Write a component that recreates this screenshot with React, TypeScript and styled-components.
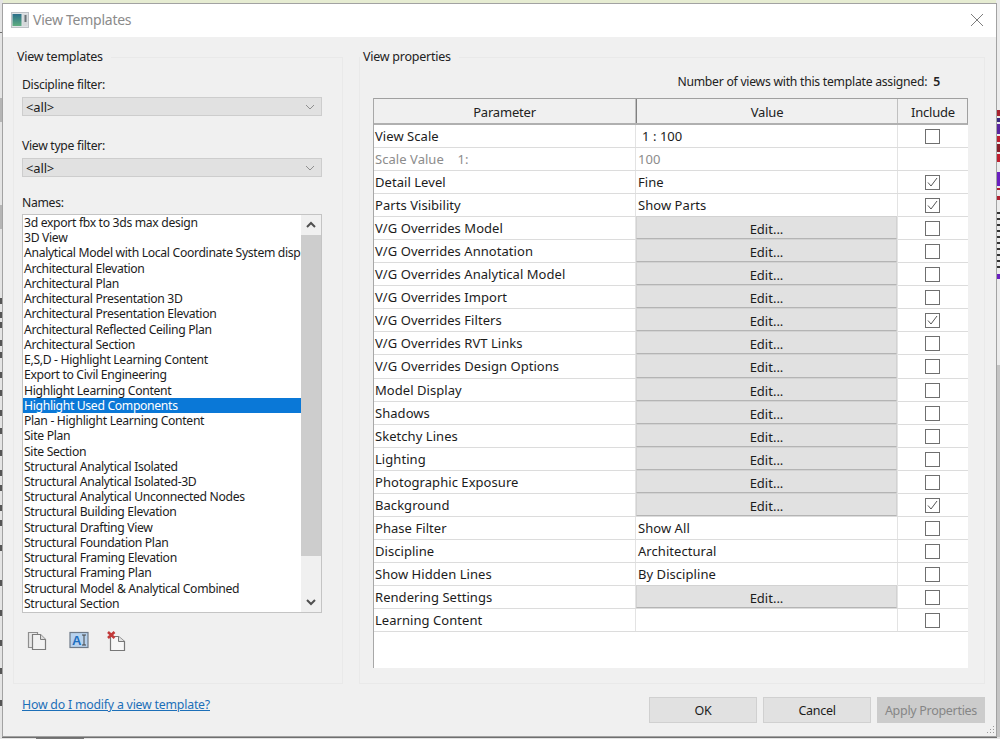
import React from 'react';
import styled, { createGlobalStyle } from 'styled-components';

const Global = createGlobalStyle`
  html, body { margin: 0; padding: 0; }
  body { font-family: "Noto Sans", "Liberation Sans", sans-serif; font-size: 13px; color: #1c1c1c; }
  * { box-sizing: border-box; }
`;

const Screen = styled.div`
  position: relative; width: 1000px; height: 739px; overflow: hidden;
  background: #d6d6d6; padding: 4px 4px 3px 3px; display: flex;
`;
const Backdrop = styled.svg`position: absolute; inset: 0; width: 1000px; height: 739px;`;
const Dialog = styled.div`
  position: relative; flex: 1; display: flex; flex-direction: column; background: #f0f0f0;
  box-shadow: 0 0 0 1px #a2a2a2, 0 1px 0 1px #6f6f6f;
`;
const TitleBar = styled.div`
  height: 33px; background: #fff; display: flex; align-items: center; padding: 0 12px 2px 8px; gap: 4px; flex: none;
`;
const TitleText = styled.span`flex: 1; font-size: 14px; color: #8b8b8b; letter-spacing: -.25px;`;
const Main = styled.div`
  flex: none; height: 655px; padding: 12px 11px 0 10px; display: grid; grid-template-columns: 330px 626px; column-gap: 16px;
`;
const Group = styled.fieldset`
  margin: 0; padding: 0; min-width: 0; border: 1px solid #e9e9e9; position: relative; height: 635px;
`;
const Legend = styled.legend`
  padding: 0 8px 0 3px; margin-left: 0; font-size: 12.5px; line-height: 16px; letter-spacing: -.25px; color: #222;
`;
const LeftInner = styled.div`
  padding: 12px 20px 0 8px; display: flex; flex-direction: column;
`;
const FieldLabel = styled.label`
  display: block; font-size: 12.2px; line-height: 16px; letter-spacing: -.3px; margin-bottom: 4px; color: #222;
`;
const Select = styled.div<{ $gap: number }>`
  height: 19px; width: 300px; background: #e1e1e1; border: 1px solid #cdcdcd; display: flex; align-items: center;
  justify-content: space-between; padding: 0 6px 0 3px; font-size: 13px; letter-spacing: -.15px; margin-bottom: ${p => p.$gap}px;
`;
const ListBox = styled.div`
  width: 300px; height: 399px; margin-top: -1px; background: #fff; border: 1px solid #c4c4c4; display: flex;
`;
const ListItems = styled.ul`
  flex: 1; min-width: 0; margin: 0; padding: 0; list-style: none; overflow: hidden;
`;
const ListItem = styled.li<{ $sel?: boolean }>`
  height: 15.24px; line-height: 15px; padding-left: 1px; font-size: 12.2px; letter-spacing: -.33px; white-space: nowrap; overflow: hidden;
  color: ${p => p.$sel ? '#fff' : '#1c1c1c'}; background: ${p => p.$sel ? '#0a78d7' : 'transparent'};
`;
const ScrollBar = styled.div`
  width: 20px; background: #f0f0f0; display: flex; flex-direction: column; align-items: center;
`;
const ScrollArrow = styled.div<{ $end?: boolean }>`
  height: 20px; display: flex; align-items: center; justify-content: center; margin-top: ${p => p.$end ? 'auto' : '0'};
`;
const ScrollThumb = styled.div`width: 20px; height: 321px; background: #cdcdcd;`;
const IconRow = styled.div`display: flex; align-items: flex-start; padding: 18px 0 0 5px;`;
const ToolIcon = styled.svg<{ $mr: number }>`width: 20px; height: 20px; margin-right: ${p => p.$mr}px;`;

const RightInner = styled.div`padding: 0 17px 0 13px; display: flex; flex-direction: column;`;
const Assigned = styled.div`
  height: 33px; padding: 8px 27px 0 0; text-align: right; font-size: 12.2px; letter-spacing: -.25px; color: #222;
`;
const AssignedNum = styled.b`margin-left: 6px; font-weight: 600;`;
const Table = styled.div`
  width: 595px; height: 570px; background: #fff; border-left: 1px solid #a8a8a8; display: flex; flex-direction: column;
`;
const Row = styled.div`
  display: grid; grid-template-columns: 262px 262px 70px; height: 23.05px; border-bottom: 1px solid #dcdcdc; flex: none;
`;
const HeaderRow = styled.div`
  display: grid; grid-template-columns: 262px 262px 70px; height: 27px; background: #f0f0f0;
  border-top: 1px solid #a0a0a0; border-bottom: 2px solid #b0b0b0; border-right: 1px solid #a0a0a0; flex: none;
`;
const HeadCell = styled.div<{ $strong?: boolean }>`
  display: flex; align-items: center; justify-content: center; padding-top: 1px; font-size: 13px; letter-spacing: -.2px; color: #222;
  border-right: 1px solid #c0c0c0; border-left: ${p => p.$strong ? '1px solid #808080' : 'none'};
  &:last-child { border-right: none; }
`;
const Cell = styled.div<{ $dim?: boolean; $indent?: number }>`
  display: flex; align-items: center; padding-left: ${p => p.$indent ?? 1}px; font-size: 13px; letter-spacing: .05px;
  white-space: pre; border-right: 1px solid #e3e3e3; color: ${p => p.$dim ? '#8c8c8c' : '#1c1c1c'};
`;
const EditBtn = styled.button`
  width: 100%; height: 100%; margin: 0; padding: 3px 0 0; background: #e1e1e1; border: 1px solid #d2d2d2; border-bottom: 1px solid #b4b4b4;
  font: inherit; font-size: 13px; color: #1c1c1c;
`;
const EditCell = styled.div`border-right: 1px solid #e3e3e3; margin-top: -1px;`;
const CheckCell = styled.div`display: flex; align-items: center; justify-content: center; padding: 1px 2px 0 0;`;
const CheckBox = styled.span`
  width: 15px; height: 15px; border: 1px solid #6f6f6f; background: #fff; display: flex; align-items: center; justify-content: center;
`;
const Footer = styled.div`flex: 1; position: relative; display: flex; align-items: flex-start; padding: 5px 11px 0 19px;`;
const HelpLink = styled.a`
  flex: 1; font-size: 12.3px; color: #1c6fb8; text-decoration: underline; line-height: 16px; letter-spacing: -.2px;
`;
const Buttons = styled.div`display: flex; gap: 6px;`;
const DlgBtn = styled.button<{ $off?: boolean }>`
  width: 108px; height: 26px; margin: 0; padding: 0; font: inherit; font-size: 12.5px; letter-spacing: -.3px;
  background: ${p => p.$off ? '#cccccc' : '#e1e1e1'}; border: 1px solid ${p => p.$off ? '#cccccc' : '#d0d0d0'}; color: ${p => p.$off ? '#868686' : '#1c1c1c'};
`;
const Grip = styled.svg`position: absolute; right: 1px; bottom: 1px; width: 10px; height: 10px;`;

const names = ['3d export fbx to 3ds max design','3D View','Analytical Model with Local Coordinate System display','Architectural Elevation','Architectural Plan','Architectural Presentation 3D','Architectural Presentation Elevation','Architectural Reflected Ceiling Plan','Architectural Section','E,S,D - Highlight Learning Content','Export to Civil Engineering','Highlight Learning Content','Highlight Used Components','Plan - Highlight Learning Content','Site Plan','Site Section','Structural Analytical Isolated','Structural Analytical Isolated-3D','Structural Analytical Unconnected Nodes','Structural Building Elevation','Structural Drafting View','Structural Foundation Plan','Structural Framing Elevation','Structural Framing Plan','Structural Model & Analytical Combined','Structural Section'];

type R = { p: string; v?: string; edit?: boolean; c?: boolean; none?: boolean; dim?: boolean; indent?: number };
const E = (p: string, c = false): R => ({ p, edit: true, c });
const rows: R[] = [
  { p: 'View Scale', v: '1 : 100', indent: 6 },
  { p: 'Scale Value    1:', v: '100', dim: true, none: true, indent: 2 },
  { p: 'Detail Level', v: 'Fine', c: true, indent: 2 },
  { p: 'Parts Visibility', v: 'Show Parts', c: true, indent: 2 },
  E('V/G Overrides Model'), E('V/G Overrides Annotation'), E('V/G Overrides Analytical Model'), E('V/G Overrides Import'),
  E('V/G Overrides Filters', true), E('V/G Overrides RVT Links'), E('V/G Overrides Design Options'), E('Model Display'),
  E('Shadows'), E('Sketchy Lines'), E('Lighting'), E('Photographic Exposure'), E('Background', true),
  { p: 'Phase Filter', v: 'Show All', indent: 2 }, { p: 'Discipline', v: 'Architectural', indent: 2 }, { p: 'Show Hidden Lines', v: 'By Discipline', indent: 2 },
  E('Rendering Settings'), { p: 'Learning Content', v: '' },
];

const stripes = [
  [110, 6, '#a8232e'], [118, 4, '#3a2a80'], [124, 10, '#5a25a0'], [136, 6, '#c02030'], [144, 8, '#8a1f2a'], [154, 8, '#c02030'],
  [172, 14, '#6a20c0'], [188, 2, '#b02030'], [196, 4, '#b02030'],
  [274, 5, '#6a20c0'],
];
const dashes = [212, 218, 224, 230, 236, 242, 248, 254, 260, 266];

const Chevron = () => (
  <svg width="10" height="6" viewBox="0 0 10 6"><path d="M1 1l4 4 4-4" fill="none" stroke="#8f8f8f" strokeWidth="1" /></svg>
);
const ArrowGlyph = ({ up }: { up?: boolean }) => (
  <svg width="10" height="8" viewBox="0 0 10 8"><path d={up ? 'M1 6l4-4 4 4' : 'M1 2l4 4 4-4'} fill="none" stroke="#505050" strokeWidth="2" /></svg>
);

export default function App() {
  return (
    <Screen>
      <Global />
      <Backdrop viewBox="0 0 1000 739">
        <rect width="1000" height="4" fill="#e6ecd2" />
        <rect width="3" height="739" fill="#e4e4e4" />
        <rect x="996" width="4" height="739" fill="#ececec" />
        {stripes.map(([y, h, c]) => <rect key={String(y)} x="997" y={y as number} width="3" height={h as number} fill={c as string} />)}
        {dashes.map(y => <rect key={y} x="997" y={y} width="3" height="2" fill="#333" />)}
        <rect x="997" y="365" width="3" height="374" fill="#c4c4c4" />
        <rect y="32" width="3" height="1" fill="#707070" />
        <rect y="98" width="3" height="24" fill="#b5b5b5" />
        <rect y="205" width="3" height="24" fill="#b5b5b5" />
        {[298, 312, 322, 340, 352, 372, 390, 410, 428, 450, 470, 485, 505, 520, 545, 580, 610, 640, 668, 700].map(y => (
          <rect key={y} y={y} width="2" height="6" fill="#555" />
        ))}
        <rect y="737" width="1000" height="2" fill="#e4e4e4" />
        <rect x="36" y="737" width="48" height="2" fill="#777" />
      </Backdrop>
      <Dialog>
        <TitleBar>
          <svg width="18" height="16" viewBox="0 0 18 16">
            <defs>
              <linearGradient id="tpl" x1="0" y1="0" x2="0" y2="1">
                <stop offset="0" stopColor="#2a6f8a" />
                <stop offset="1" stopColor="#5fae80" />
              </linearGradient>
            </defs>
            <rect x="0.5" y="0.5" width="17" height="15" fill="#dfe3e6" stroke="#bcc0c4" />
            <rect x="1.5" y="2" width="9" height="12" fill="url(#tpl)" />
            <rect x="11.5" y="2" width="5" height="12" fill="#d4d8da" />
            <rect x="13.5" y="3" width="2" height="7" fill="#6b7378" />
          </svg>
          <TitleText>View Templates</TitleText>
          <svg width="14" height="14" viewBox="0 0 14 14"><path d="M1 1l12 12M13 1L1 13" stroke="#7d7d7d" strokeWidth="1" fill="none" /></svg>
        </TitleBar>
        <Main>
          <Group>
            <Legend>View templates</Legend>
            <LeftInner>
              <FieldLabel>Discipline filter:</FieldLabel>
              <Select $gap={22}><span>&lt;all&gt;</span><Chevron /></Select>
              <FieldLabel>View type filter:</FieldLabel>
              <Select $gap={18}><span>&lt;all&gt;</span><Chevron /></Select>
              <FieldLabel>Names:</FieldLabel>
              <ListBox>
                <ListItems>
                  {names.map(n => <ListItem key={n} $sel={n === 'Highlight Used Components'}>{n}</ListItem>)}
                </ListItems>
                <ScrollBar>
                  <ScrollArrow><ArrowGlyph up /></ScrollArrow>
                  <ScrollThumb />
                  <ScrollArrow $end><ArrowGlyph /></ScrollArrow>
                </ScrollBar>
              </ListBox>
              <IconRow>
                <ToolIcon $mr={22} viewBox="0 0 20 20">
                  <path d="M1.5 1.5h9v15h-9z" fill="#e8e8e8" stroke="#8f8f8f" strokeWidth="1.2" />
                  <path d="M5.5 3.5h8l5 5v10h-13z" fill="#f2f2f2" stroke="#7c7c7c" strokeWidth="1.2" />
                  <path d="M13.5 3.5v5h5" fill="#dcdcdc" stroke="#7c7c7c" />
                </ToolIcon>
                <ToolIcon $mr={18} viewBox="0 0 20 20">
                  <rect x="1" y="1.5" width="18" height="15" fill="#b7d2ee" stroke="#6e7a88" strokeWidth="1.2" />
                  <text x="3" y="14" fontSize="13" fontWeight="700" fontFamily="Liberation Sans, sans-serif" fill="#1f6fc0">A</text>
                  <path d="M13 4h4M13 14h4M15 4v10" stroke="#444" strokeWidth="1" fill="none" />
                </ToolIcon>
                <ToolIcon $mr={0} viewBox="0 0 20 20">
                  <path d="M3.5 5.5h8l6 5v9h-14z" fill="#f7f7f7" stroke="#777" strokeWidth="1.2" />
                  <path d="M11.5 5.5v5h6" fill="#e2e2e2" stroke="#777" />
                  <path d="M1 1l6.5 6M7.5 1L1 7" stroke="#c23a3a" strokeWidth="2.6" fill="none" />
                </ToolIcon>
              </IconRow>
            </LeftInner>
          </Group>
          <Group>
            <Legend>View properties</Legend>
            <RightInner>
              <Assigned>Number of views with this template assigned:<AssignedNum>5</AssignedNum></Assigned>
              <Table>
                <HeaderRow>
                  <HeadCell>Parameter</HeadCell>
                  <HeadCell $strong>Value</HeadCell>
                  <HeadCell>Include</HeadCell>
                </HeaderRow>
                {rows.map(r => (
                  <Row key={r.p}>
                    <Cell $dim={r.dim}>{r.p}</Cell>
                    {r.edit
                      ? <EditCell><EditBtn>Edit...</EditBtn></EditCell>
                      : <Cell $dim={r.dim} $indent={r.indent}>{r.v}</Cell>}
                    <CheckCell>
                      {!r.none && (
                        <CheckBox>
                          {r.c && <svg width="13" height="13" viewBox="0 0 13 13"><path d="M2 6.5l3 3.5 6-8" fill="none" stroke="#555" strokeWidth="1" /></svg>}
                        </CheckBox>
                      )}
                    </CheckCell>
                  </Row>
                ))}
              </Table>
            </RightInner>
          </Group>
        </Main>
        <Footer>
          <HelpLink href="#">How do I modify a view template?</HelpLink>
          <Buttons>
            <DlgBtn>OK</DlgBtn>
            <DlgBtn>Cancel</DlgBtn>
            <DlgBtn $off>Apply Properties</DlgBtn>
          </Buttons>
          <Grip viewBox="0 0 10 10"><path d="M8 1h1v1H8zM5 4h1v1H5zM8 4h1v1H8zM2 7h1v1H2zM5 7h1v1H5zM8 7h1v1H8z" fill="#9a9a9a" /></Grip>
        </Footer>
      </Dialog>
    </Screen>
  );
}
